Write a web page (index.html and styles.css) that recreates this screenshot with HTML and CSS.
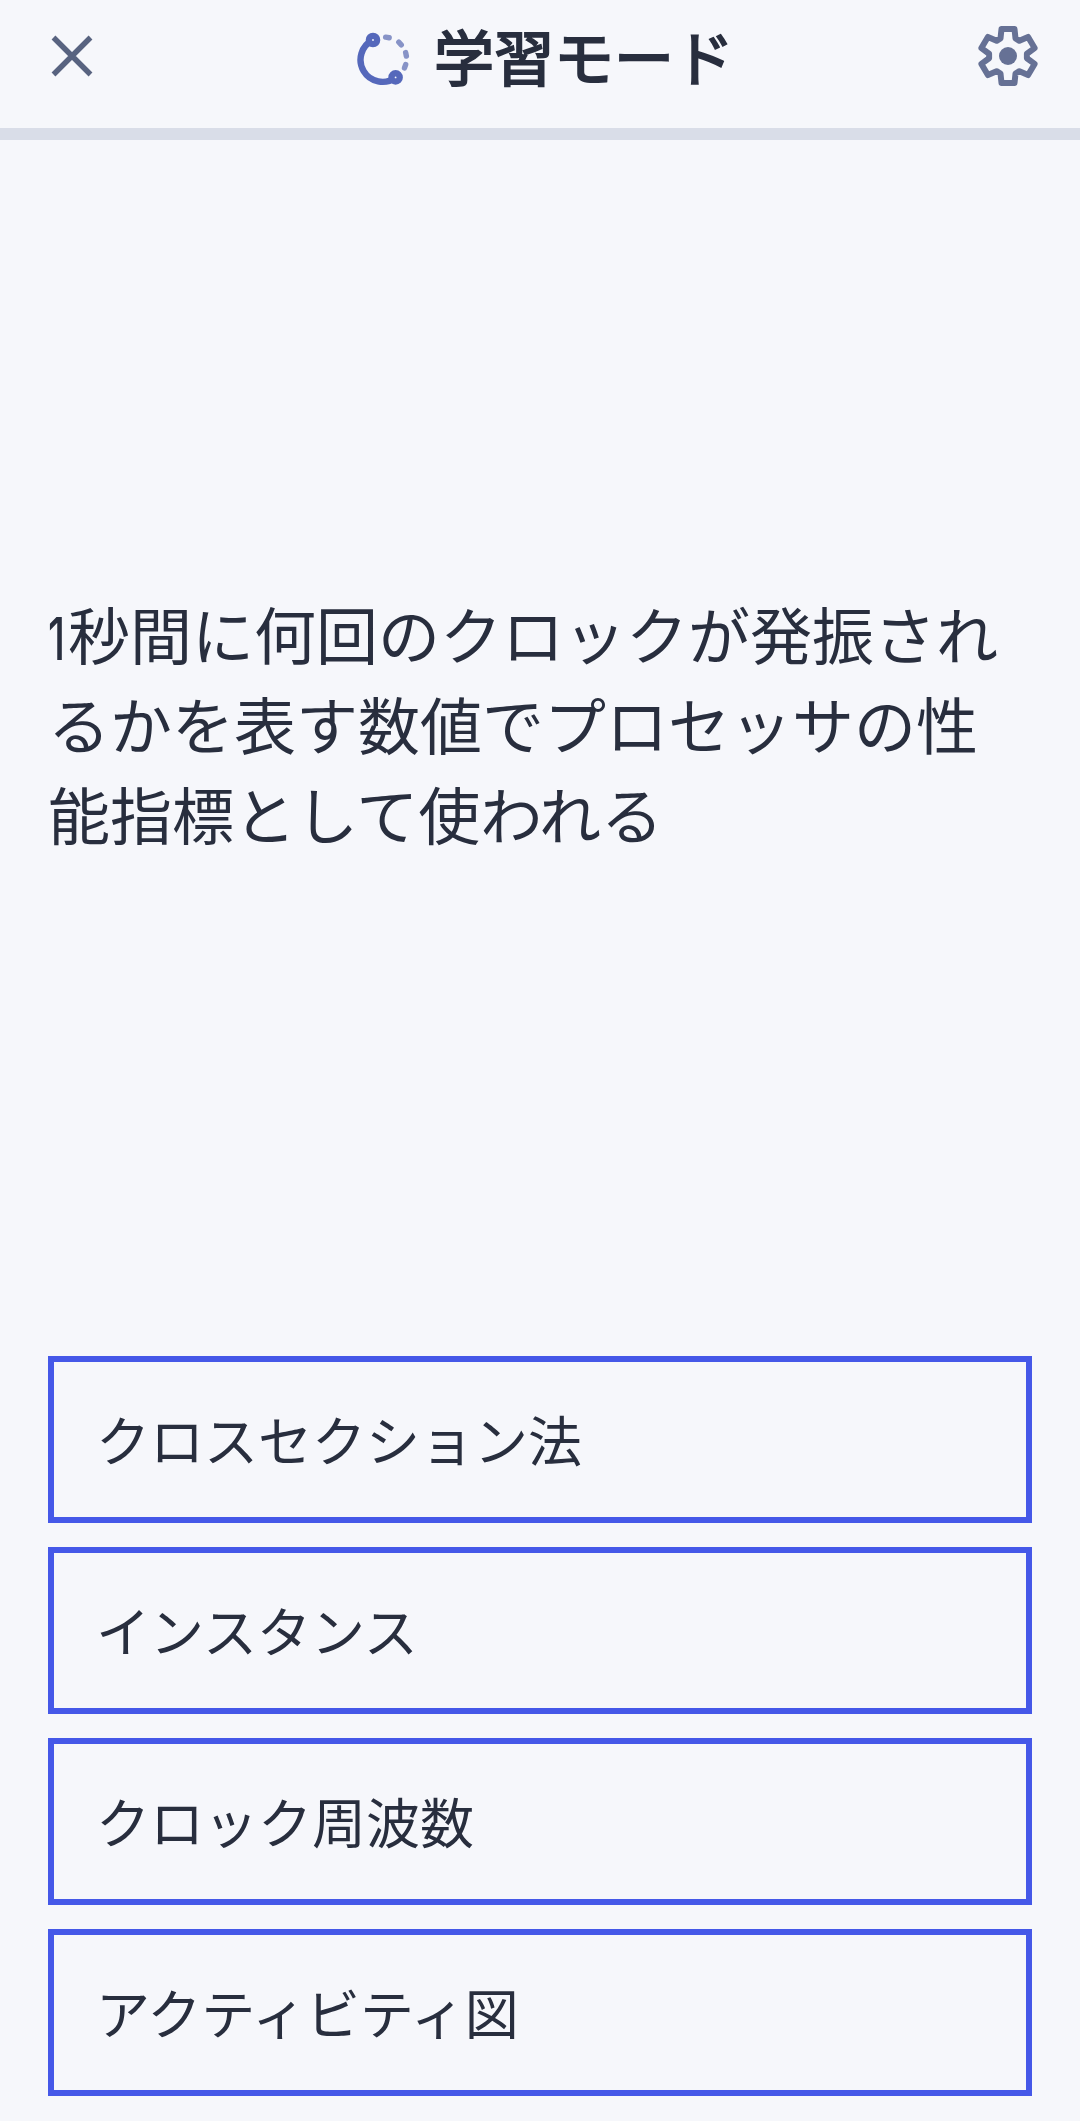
FILE: index.html
```
<!DOCTYPE html>
<html lang="ja">
<head>
<meta charset="utf-8">
<title>学習モード</title>
<link rel="stylesheet" href="styles.css">
</head>
<body>
<div class="app">
  <header class="header">
    <button class="icon-button" aria-label="閉じる">
      <svg width="42" height="42" viewBox="0 0 42 42">
        <path d="M2.5 2.5 39.5 39.5M39.5 2.5 2.5 39.5" fill="none" stroke="#586380" stroke-width="5.4"/>
      </svg>
    </button>
    <h1 class="title">
      <svg class="mode-icon" width="56" height="56" viewBox="-28 -28 56 56">
        <path d="M-11 -19A22 22 0 1 0 11.5 18.6" fill="none" stroke="#5568bb" stroke-width="6.4"/>
        <g stroke="#8793c7" stroke-width="5.4" stroke-linecap="round">
          <path d="M-1.8 -21.8 1.8 -21.8" transform="rotate(9)"/>
          <path d="M-1.8 -22.3 1.8 -22.3" transform="rotate(46)"/>
          <path d="M-1.8 -22.5 1.8 -22.5" transform="rotate(78)"/>
          <path d="M-1.8 -22.3 1.8 -22.3" transform="rotate(109)"/>
        </g>
        <g fill="#f6f7fb" stroke="#5568bb" stroke-width="6.4">
          <circle cx="-11" cy="-19" r="4.1"/>
          <circle cx="11.6" cy="18.4" r="4.1"/>
        </g>
      </svg>
      <span class="title-text">学習モード</span>
    </h1>
    <button class="icon-button" aria-label="設定">
      <svg width="60" height="60" viewBox="-30 -30 60 60">
        <path fill="none" stroke="#667195" stroke-width="6" stroke-linejoin="round" d="M-6.5 -27H6.5L7.5 -17.5L11.4 -15.2L20.1 -19.1L26.6 -7.9L18.9 -2.3V2.3L26.6 7.9L20.1 19.1L11.4 15.2L7.5 17.5L6.5 27H-6.5L-7.5 17.5L-11.4 15.2L-20.1 19.1L-26.6 7.9L-18.9 2.3V-2.3L-26.6 -7.9L-20.1 -19.1L-11.4 -15.2L-7.5 -17.5Z"/>
        <circle r="9" fill="#667195"/>
      </svg>
    </button>
  </header>
  <div class="progress"></div>
  <main class="question">
    <p class="prompt"><span class="digit">1</span>秒間に何回のクロックが発振され<br>るかを表す数値でプロセッサの性<br>能指標として使われる</p>
  </main>
  <div class="options">
    <button class="option">クロスセクション法</button>
    <button class="option">インスタンス</button>
    <button class="option">クロック周波数</button>
    <button class="option">アクティビティ図</button>
  </div>
</div>
</body>
</html>
```
FILE: styles.css
```
* { box-sizing: border-box; }

body {
  margin: 0;
  background: #f6f7fb;
  color: #282e3e;
  font-family: "Noto Sans CJK JP", sans-serif;
}

button {
  margin: 0;
  border: 0;
  background: none;
  color: inherit;
  font: inherit;
}

.app {
  display: flex;
  flex-direction: column;
  height: 2121px;
}

.header {
  display: flex;
  align-items: center;
  justify-content: space-between;
  height: 128px;
  padding: 0 42px 16px 51px;
}

.icon-button {
  display: flex;
  padding: 0;
}

.title {
  display: flex;
  align-items: center;
  gap: 22px;
  margin: 0 0 0 19px;
  font-size: 60px;
  font-weight: 400;
  line-height: 88px;
}

/* thicken the regular weight a little, real bold is too heavy */
.title-text {
  margin-top: -2px;
  -webkit-text-stroke: 2px #282e3e;
}

.mode-icon { margin-top: 6px; }

/* full-width rule under the header */
.progress {
  height: 12px;
  background: #d9dde8;
}

.question {
  display: flex;
  flex: 1;
  align-items: center;
  padding: 0 48px 51px;
}

.prompt {
  margin: 0;
  font-size: 62px;
  line-height: 90px;
  white-space: nowrap;
}

/* narrow numeral */
.digit {
  display: inline-block;
  width: 20px;
  font-family: Inter, sans-serif;
  font-size: 59px;
  font-weight: 500;
  line-height: 1;
  transform: scaleX(0.7);
  transform-origin: left;
}

.options {
  display: flex;
  flex-direction: column;
  gap: 24px;
  padding: 0 48px 25px;
}

.option {
  height: 167px;
  padding: 0 42px 2px;
  border: 6px solid #4558e8;
  font-size: 54px;
  text-align: left;
}
```
